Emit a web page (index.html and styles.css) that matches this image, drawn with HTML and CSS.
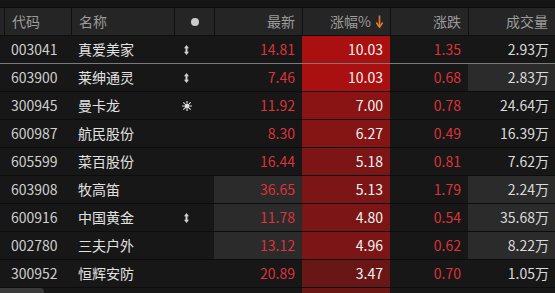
FILE: index.html
```html
<!DOCTYPE html>
<html lang="zh">
<head>
<meta charset="utf-8">
<link rel="stylesheet" href="styles.css">
</head>
<body>
<div class="board">
  <div class="topband"></div>
  <div class="row head">
    <div class="c c0"></div>
    <div class="c code">代码</div>
    <div class="c name">名称</div>
    <div class="c mark"><span class="dot"></span></div>
    <div class="c r">最新</div>
    <div class="c r pct-h">涨幅%<svg class="arrow" width="7" height="13" viewBox="0 0 7 13"><path d="M3.5 0.5 V11" stroke="#e8792a" stroke-width="1.6" fill="none"/><path d="M0.3 7.5 L3.5 12.2 L6.7 7.5" stroke="#e8792a" stroke-width="1.6" fill="none"/></svg></div>
    <div class="c r">涨跌</div>
    <div class="c r">成交量</div>
  </div>
  <div class="body">
    <div class="row sel">
      <div class="c c0"></div><div class="c code">003041</div><div class="c name">真爱美家</div>
      <div class="c mark"><svg class="ud" width="5" height="10" viewBox="0 0 5 10"><path d="M2.5 0 L5 3.2 L3.5 3.2 L3.5 6.8 L5 6.8 L2.5 10 L0 6.8 L1.5 6.8 L1.5 3.2 L0 3.2 Z" fill="#cfcfcf"/></svg></div>
      <div class="c r red">14.81</div><div class="c r pct p10">10.03</div><div class="c r red">1.35</div><div class="c r vol">2.93万</div>
    </div>
    <div class="row">
      <div class="c c0"></div><div class="c code">603900</div><div class="c name">莱绅通灵</div>
      <div class="c mark"><svg class="ud" width="5" height="10" viewBox="0 0 5 10"><path d="M2.5 0 L5 3.2 L3.5 3.2 L3.5 6.8 L5 6.8 L2.5 10 L0 6.8 L1.5 6.8 L1.5 3.2 L0 3.2 Z" fill="#cfcfcf"/></svg></div>
      <div class="c r red">7.46</div><div class="c r pct p10">10.03</div><div class="c r red">0.68</div><div class="c r vol hl">2.83万</div>
    </div>
    <div class="row">
      <div class="c c0"></div><div class="c code">300945</div><div class="c name">曼卡龙</div>
      <div class="c mark"><svg class="sun" width="10" height="10" viewBox="0 0 10 10"><circle cx="5" cy="5" r="2.6" fill="#dcdcdc"/><g stroke="#dcdcdc" stroke-width="1.2"><path d="M5 0 V2 M5 8 V10 M0 5 H2 M8 5 H10 M1.4 1.4 L2.8 2.8 M7.2 7.2 L8.6 8.6 M8.6 1.4 L7.2 2.8 M1.4 8.6 L2.8 7.2"/></g></svg></div>
      <div class="c r red">11.92</div><div class="c r pct p7">7.00</div><div class="c r red">0.78</div><div class="c r vol">24.64万</div>
    </div>
    <div class="row">
      <div class="c c0"></div><div class="c code">600987</div><div class="c name">航民股份</div>
      <div class="c mark"></div>
      <div class="c r red">8.30</div><div class="c r pct p6">6.27</div><div class="c r red">0.49</div><div class="c r vol">16.39万</div>
    </div>
    <div class="row">
      <div class="c c0"></div><div class="c code">605599</div><div class="c name">菜百股份</div>
      <div class="c mark"></div>
      <div class="c r red">16.44</div><div class="c r pct p5">5.18</div><div class="c r red">0.81</div><div class="c r vol">7.62万</div>
    </div>
    <div class="row">
      <div class="c c0"></div><div class="c code">603908</div><div class="c name">牧高笛</div>
      <div class="c mark"></div>
      <div class="c r red hl">36.65</div><div class="c r pct p5">5.13</div><div class="c r red">1.79</div><div class="c r vol hl">2.24万</div>
    </div>
    <div class="row">
      <div class="c c0"></div><div class="c code">600916</div><div class="c name">中国黄金</div>
      <div class="c mark"><svg class="ud" width="5" height="10" viewBox="0 0 5 10"><path d="M2.5 0 L5 3.2 L3.5 3.2 L3.5 6.8 L5 6.8 L2.5 10 L0 6.8 L1.5 6.8 L1.5 3.2 L0 3.2 Z" fill="#cfcfcf"/></svg></div>
      <div class="c r red hl">11.78</div><div class="c r pct p5">4.80</div><div class="c r red">0.54</div><div class="c r vol hl">35.68万</div>
    </div>
    <div class="row">
      <div class="c c0"></div><div class="c code">002780</div><div class="c name">三夫户外</div>
      <div class="c mark"></div>
      <div class="c r red hl">13.12</div><div class="c r pct p5">4.96</div><div class="c r red">0.62</div><div class="c r vol hl">8.22万</div>
    </div>
    <div class="row">
      <div class="c c0"></div><div class="c code">300952</div><div class="c name">恒辉安防</div>
      <div class="c mark"></div>
      <div class="c r red">20.89</div><div class="c r pct p3">3.47</div><div class="c r red">0.70</div><div class="c r vol">1.05万</div>
    </div>
    <div class="row">
      <div class="c c0"></div><div class="c code">&nbsp;</div><div class="c name">&nbsp;</div>
      <div class="c mark"></div>
      <div class="c r red">&nbsp;</div><div class="c r pct p3">&nbsp;</div><div class="c r red">&nbsp;</div><div class="c r vol">&nbsp;</div>
    </div>
  </div>
  <div class="thumb"></div>
</div>
</body>
</html>
```

FILE: styles.css
```css
html, body {
  margin: 0;
  padding: 0;
  background: #171717;
}
.board {
  position: relative;
  width: 555px;
  height: 293px;
  overflow: hidden;
  background: #171717;
  font-family: "Noto Sans CJK SC", "Noto Sans", sans-serif;
  font-size: 14px;
}
.topband {
  height: 7px;
  background: #161616;
  border-bottom: 1px solid #0c0c0c;
}
.row {
  display: grid;
  grid-template-columns: 4px 67px 103px 40px 88px 88px 78px 87px;
  height: 28px;
  box-sizing: border-box;
  border-bottom: 1px solid #0d0d0d;
}
.row.sel {
  border-bottom: 1px solid #7a7a7a;
}
.head {
  background: #252525;
  color: #9c9c9c;
  border-bottom: 1px solid #0e0e0e;
}
.head .c {
  border-left: 1px solid #101010;
}
.head .c0 {
  border-left: none;
}
.c {
  display: flex;
  align-items: center;
  line-height: 27px;
  white-space: nowrap;
  box-sizing: border-box;
}
.code {
  padding-left: 7px;
  color: #cfcfcf;
}
.name {
  padding-left: 7px;
  color: #e2e2e2;
}
.head .code, .head .name {
  color: #9c9c9c;
}
.mark {
  padding-left: 8px;
}
.head .mark {
  justify-content: center;
  padding-left: 0;
}
.dot {
  width: 8px;
  height: 8px;
  border-radius: 50%;
  background: #cbcbcb;
}
.ud {
  margin-left: 2px;
}
.r {
  justify-content: flex-end;
  padding-right: 7px;
}
.pct-h .arrow {
  margin-left: 5px;
}
.red {
  color: #de3238;
}
.pct {
  color: #f2f2f2;
}
.vol {
  color: #dadada;
  padding-right: 6px;
}
.hl {
  background: #2b2b2b;
}
.p10 { background: #aa1010; }
.p7 { background: #8a1313; }
.p6 { background: #851414; }
.p5 { background: #7c1515; }
.p3 { background: #691616; }
.thumb {
  position: absolute;
  left: 0;
  bottom: 0;
  width: 44px;
  height: 5px;
  background: #3a3a3a;
  border-top-right-radius: 4px;
}
```
